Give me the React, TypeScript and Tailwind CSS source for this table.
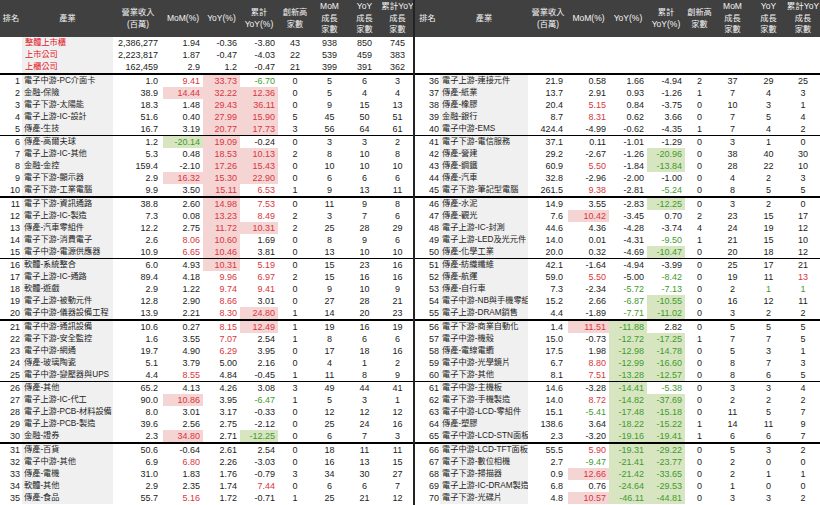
import React from "react";

type Row = string[];

const LEFT_COLS = "grid-cols-[22px_91px_50px_40px_37px_38px_34px_35px_35px_31px]";
const RIGHT_COLS = "grid-cols-[25px_88px_40px_41px_38px_38px_29px_37px_35px_34px]";

const summary: Row[] = [
  ["", "整體上市櫃", "2,386,277", "1.94", "-0.36", "-3.80", "43", "938", "850", "745"],
  ["", "上市公司", "2,223,817", "1.87", "-0.47", "-4.03", "22", "539", "459", "383"],
  ["", "上櫃公司", "162,459", "2.9", "1.2", "-0.47", "21", "399", "391", "362"],
];

const raw = `1|電子中游-PC介面卡|1.0|9.41|33.73|-6.70|0|5|6|3
2|金融-保險|38.9|14.44|32.22|12.36|0|5|4|4
3|電子下游-太陽能|18.3|1.48|29.43|36.11|0|9|15|13
4|電子上游-IC-設計|51.6|0.40|27.99|15.90|5|45|50|51
5|傳產-生技|16.7|3.19|20.77|17.73|3|56|64|61
6|傳產-高爾夫球|1.2|-20.14|19.09|-0.24|0|3|3|2
7|電子上游-IC-其他|5.3|0.48|18.53|10.13|2|8|10|8
8|金融-金控|159.4|-2.10|17.26|15.43|0|10|10|10
9|電子下游-顯示器|2.9|16.32|15.30|22.90|0|6|6|6
10|電子下游-工業電腦|9.9|3.50|15.11|6.53|1|9|13|11
11|電子下游-資訊通路|38.8|2.60|14.98|7.53|0|11|9|8
12|電子上游-IC-製造|7.3|0.08|13.23|8.49|2|3|7|6
13|傳產-汽車零組件|12.2|2.75|11.72|10.31|2|25|28|29
14|電子下游-消費電子|2.6|8.06|10.60|1.69|0|8|9|6
15|電子中游-電源供應器|10.9|6.65|10.46|3.81|0|13|10|10
16|軟體-系統整合|6.0|4.93|10.31|5.19|0|15|23|16
17|電子上游-IC-通路|89.4|4.18|9.96|6.97|2|15|16|16
18|軟體-遊戲|2.9|1.22|9.74|9.41|0|9|10|9
19|電子上游-被動元件|12.8|2.90|8.66|3.01|0|27|28|21
20|電子中游-儀器設備工程|13.9|2.21|8.30|24.80|1|14|20|23
21|電子中游-通訊設備|10.6|0.27|8.15|12.49|1|19|16|19
22|電子下游-安全監控|1.6|3.55|7.07|2.54|1|8|6|6
23|電子中游-網通|19.7|4.90|6.29|3.95|0|17|18|16
24|傳產-玻璃陶瓷|5.1|3.79|5.00|2.16|0|4|1|2
25|電子中游-變壓器與UPS|4.4|8.55|4.84|-0.45|1|11|8|9
26|傳產-其他|65.2|4.13|4.26|3.08|3|49|44|41
27|電子上游-IC-代工|90.0|10.86|3.95|-6.47|1|5|3|1
28|電子上游-PCB-材料設備|8.0|3.01|3.17|-0.33|0|12|12|12
29|電子上游-PCB-製造|39.6|2.56|2.75|-2.12|0|25|24|16
30|金融-證券|2.3|34.80|2.71|-12.25|0|6|7|3
31|傳產-百貨|50.6|-0.64|2.61|2.54|0|18|11|11
32|電子中游-其他|6.9|6.80|2.26|-3.03|0|16|13|15
33|傳產-電機|31.0|1.83|1.76|-0.79|3|34|30|27
34|軟體-其他|2.9|2.35|1.74|7.44|0|6|6|7
35|傳產-食品|55.7|5.16|1.72|-0.71|1|25|21|12
36|電子上游-連接元件|21.9|0.58|1.66|-4.94|2|37|29|25
37|傳產-紙業|13.7|2.91|0.93|-1.26|1|7|4|3
38|傳產-橡膠|20.4|5.15|0.84|-3.75|0|10|3|1
39|金融-銀行|8.7|8.31|0.62|3.66|0|7|5|4
40|電子中游-EMS|424.4|-4.99|-0.62|-4.35|1|7|4|2
41|電子下游-電信服務|37.1|0.11|-1.01|-1.29|0|3|1|0
42|傳產-營建|29.2|-2.67|-1.26|-20.96|0|38|40|30
43|傳產-鋼鐵|60.9|5.50|-1.84|-13.84|0|28|22|10
44|傳產-汽車|32.8|-2.96|-2.00|-1.00|0|4|2|3
45|電子下游-筆記型電腦|261.5|9.38|-2.81|-5.24|0|8|5|5
46|傳產-水泥|14.9|3.55|-2.83|-12.25|0|3|2|0
47|傳產-觀光|7.6|10.42|-3.45|0.70|2|23|15|17
48|電子上游-IC-封測|44.6|4.36|-4.28|-3.74|4|24|19|12
49|電子上游-LED及光元件|14.0|0.01|-4.31|-9.50|1|21|15|10
50|傳產-化學工業|20.0|0.32|-4.69|-10.47|0|20|18|12
51|傳產-紡織纖維|42.1|-1.64|-4.94|-3.99|0|25|17|21
52|傳產-航運|59.0|5.50|-5.00|-8.42|0|19|11|13
53|傳產-自行車|7.3|-2.34|-5.72|-7.13|0|2|1|1
54|電子中游-NB與手機零組件|15.2|2.66|-6.87|-10.55|0|16|12|11
55|電子上游-DRAM銷售|4.4|-1.89|-7.71|-11.02|0|3|2|2
56|電子下游-商業自動化|1.4|11.51|-11.88|2.82|0|5|5|5
57|電子中游-機殼|15.0|-0.73|-12.72|-17.25|1|7|7|5
58|傳產-電線電纜|17.5|1.98|-12.98|-14.78|0|5|3|1
59|電子中游-光學鏡片|6.7|8.80|-12.99|-16.60|0|8|7|3
60|電子下游-其他|8.1|7.51|-13.28|-12.57|0|8|6|5
61|電子中游-主機板|14.6|-3.28|-14.41|-5.38|0|3|3|4
62|電子下游-手機製造|14.0|8.72|-14.82|-37.69|0|2|2|2
63|電子中游-LCD-零組件|15.1|-5.41|-17.48|-15.18|0|11|5|7
64|傳產-塑膠|138.6|3.64|-18.22|-15.22|1|14|11|9
65|電子中游-LCD-STN面板|2.3|-3.20|-19.16|-19.41|1|6|6|7
66|電子中游-LCD-TFT面板|55.5|5.90|-19.31|-29.22|0|5|3|2
67|電子下游-數位相機|2.7|-9.47|-21.41|-23.77|0|2|0|0
68|電子下游-掃描器|0.9|12.66|-21.42|-33.65|0|2|1|1
69|電子上游-IC-DRAM製造|6.8|0.76|-24.64|-29.53|0|1|0|0
70|電子下游-光碟片|4.8|10.57|-46.11|-44.81|0|3|3|2`;

const rows: Row[] = raw.split("\n").map((l) => l.split("|"));

// odd coloured counts seen in the sheet
const countColor: Record<string, string> = {
  "52-9": "text-[#d9363e]",
  "53-8": "text-[#3f9a2e]",
  "53-9": "text-[#3f9a2e]",
};

const headers: string[][] = [
  ["排名"],
  ["產業"],
  ["營業收入", "(百萬)"],
  ["MoM(%)"],
  ["YoY(%)"],
  ["累計", "YoY(%)"],
  ["創新高", "家數"],
  ["MoM", "成長", "家數"],
  ["YoY", "成長", "家數"],
  ["累計YoY", "成長", "家數"],
];

function pctClass(s: string) {
  const v = parseFloat(s);
  if (v > 10) return "bg-[#f5d4d4] text-[#d9363e]";
  if (v > 5) return "text-[#d9363e]";
  if (v < -10) return "bg-[#d7e6c1] text-[#3f9a2e]";
  if (v < -5) return "text-[#3f9a2e]";
  return "";
}

function Header({ cols }: { cols: string }) {
  return (
    <div className={`grid ${cols} h-[37px] shrink-0 bg-[#404040] text-[#f4f4f4] overflow-hidden`}>
      {headers.map((lines, i) => (
        <div key={i} className="flex flex-col items-center justify-center leading-[11.5px] whitespace-nowrap">
          {lines.map((t) => (
            <span key={t} className={/[A-Za-z]/.test(t) ? "text-[8.5px]" : "text-[8.2px]"}>
              {t}
            </span>
          ))}
        </div>
      ))}
    </div>
  );
}

function DataRow({ cols, r, isSummary, rankPad }: { cols: string; r: Row; isSummary?: boolean; rankPad: string }) {
  return (
    <div className={`grid ${cols} h-[12px] leading-[12px] text-[9px] text-[#1c1c1c]`}>
      <div className={`text-right ${rankPad}`}>{r[0]}</div>
      <div
        className={`bg-[#f0f0f0] whitespace-nowrap overflow-hidden text-[8.2px] ${
          isSummary ? "pl-[3px] text-[#e3141e]" : "pl-[2px]"
        }`}
      >
        {r[1]}
      </div>
      <div className="text-right pr-[5px]">{r[2]}</div>
      {[3, 4, 5].map((i) => (
        <div key={i} className={`text-right pr-[3px] ${isSummary ? "" : pctClass(r[i])}`}>
          {r[i]}
        </div>
      ))}
      {[6, 7, 8, 9].map((i) => (
        <div key={i} className={`text-center ${countColor[`${r[0]}-${i}`] ?? ""}`}>
          {r[i]}
        </div>
      ))}
    </div>
  );
}

function Half({ cols, data, withSummary, rankPad }: { cols: string; data: Row[]; withSummary?: boolean; rankPad: string }) {
  const groups: Row[][] = [];
  for (let i = 0; i < data.length; i += 5) groups.push(data.slice(i, i + 5));
  return (
    <div className="flex flex-col">
      <Header cols={cols} />
      <div className="h-[36px] shrink-0">
        {withSummary &&
          summary.map((r, i) => <DataRow key={i} cols={cols} r={r} isSummary rankPad={rankPad} />)}
      </div>
      {groups.map((g, gi) => (
        <React.Fragment key={gi}>
          <div className="h-[1.5px] shrink-0 bg-black" />
          {g.map((r) => (
            <DataRow key={r[0]} cols={cols} r={r} rankPad={rankPad} />
          ))}
        </React.Fragment>
      ))}
    </div>
  );
}

export default function App() {
  return (
    <div className="w-[820px] h-[505px] overflow-hidden bg-white flex font-['Liberation_Sans','Noto_Sans_CJK_TC',sans-serif]">
      <Half cols={LEFT_COLS} data={rows.slice(0, 35)} withSummary rankPad="pr-[2px]" />
      <div className="w-[2px] shrink-0 bg-[#222]" />
      <Half cols={RIGHT_COLS} data={rows.slice(35)} rankPad="pr-[1px]" />
    </div>
  );
}
